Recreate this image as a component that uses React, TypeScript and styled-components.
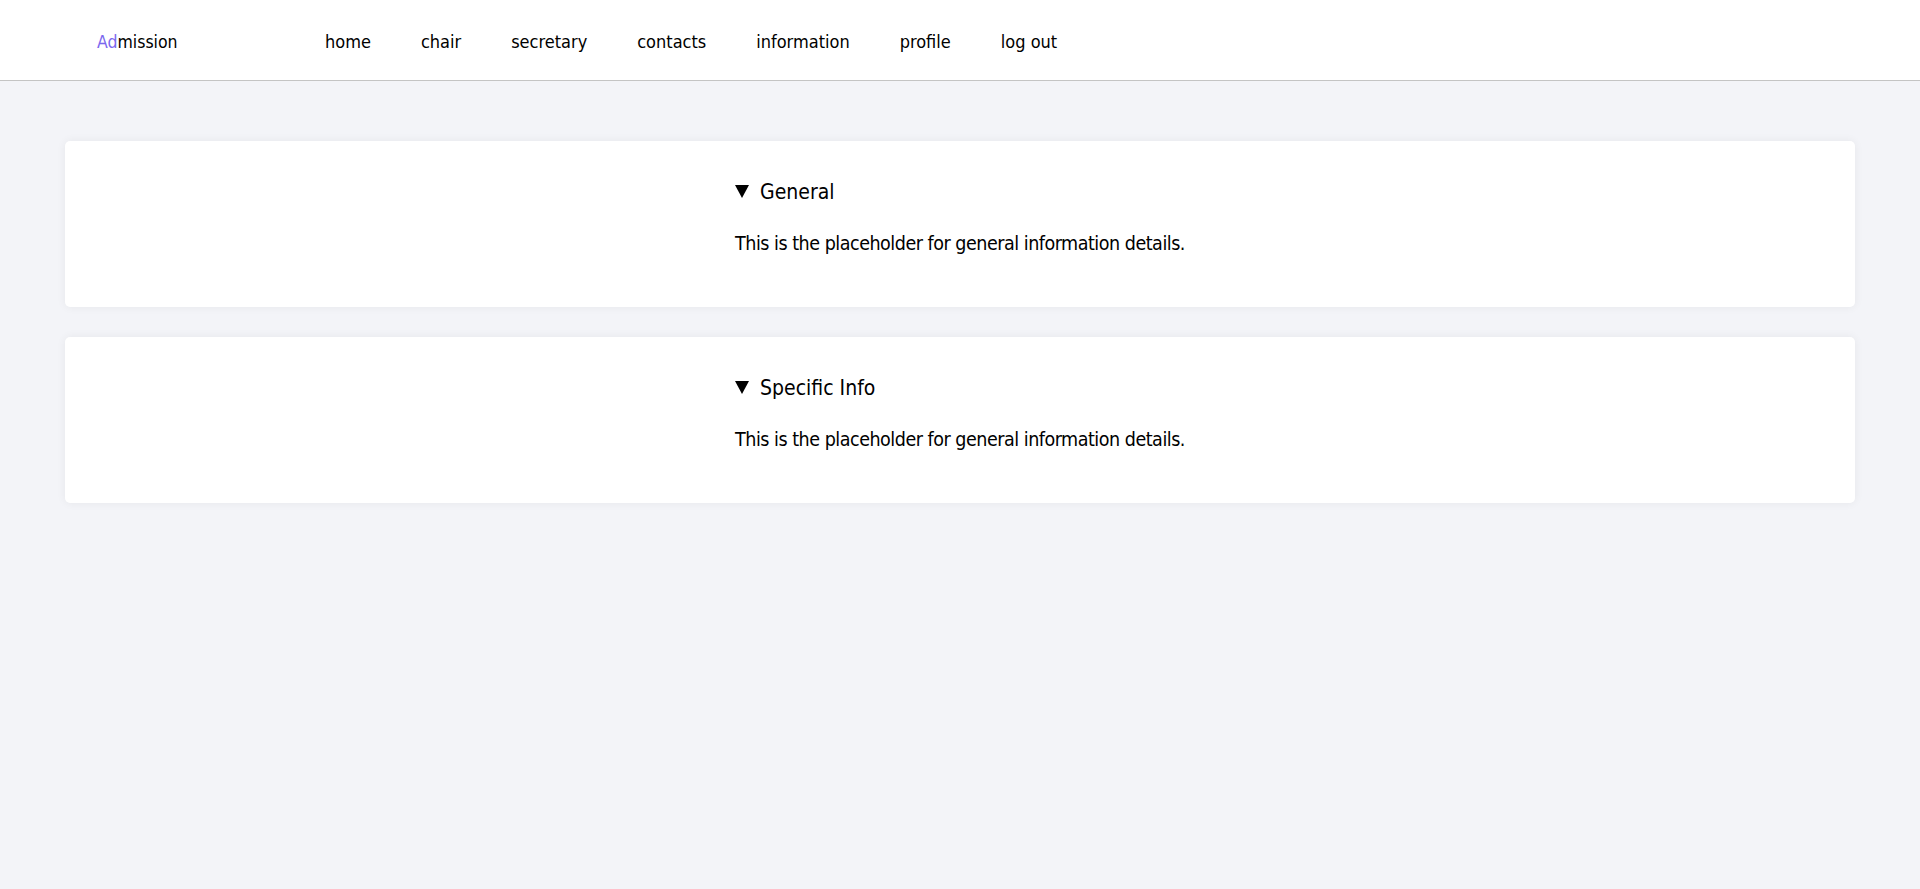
import React from "react";
import styled, { createGlobalStyle } from "styled-components";

const GlobalStyle = createGlobalStyle`
  * { box-sizing: border-box; }
  html, body { margin: 0; padding: 0; }
  body {
    background: #f3f4f8;
    font-family: "DejaVu Sans Condensed", "Liberation Sans Narrow", "Liberation Sans", sans-serif;
    font-stretch: condensed;
    color: #000;
  }
`;

const Page = styled.div`
  min-height: 889px;
  background: #f3f4f8;
`;

const Header = styled.header`
  height: 81px;
  background: #fff;
  border-bottom: 1px solid #c4c4c4;
  display: flex;
  align-items: flex-start;
  padding: 30px 0 0 97px;
`;

const Logo = styled.div`
  width: 228px;
  font-size: 17.5px;
  line-height: 24px;
  color: #000;
`;

const Accent = styled.span`
  color: #7b68ee;
`;

const Nav = styled.nav`
  display: flex;
  gap: 50px;
`;

const NavLink = styled.a`
  font-size: 18px;
  line-height: 24px;
  color: #000;
  text-decoration: none;
  cursor: pointer;
`;

const Main = styled.main`
  padding: 60px 65px;
  display: flex;
  flex-direction: column;
  gap: 30px;
`;

const Card = styled.section`
  height: 166px;
  background: #fff;
  border-radius: 5px;
  box-shadow: 0 0 10px rgba(0, 0, 0, 0.06);
  display: flex;
  justify-content: center;
  padding-top: 38px;
`;

const Details = styled.details`
  text-align: left;
`;

const Summary = styled.summary`
  list-style: none;
  display: flex;
  align-items: center;
  gap: 11px;
  font-size: 21px;
  line-height: 26px;
  cursor: pointer;
  &::-webkit-details-marker { display: none; }
`;

const Triangle = styled.span`
  flex: none;
  width: 0;
  height: 0;
  border-left: 7px solid transparent;
  border-right: 7px solid transparent;
  border-top: 13px solid #000;
  margin-top: -2px;
`;

const Body = styled.p`
  margin: 27px 0 0;
  font-size: 19.5px;
  letter-spacing: -0.48px;
  line-height: 24px;
`;

const sections = [
  { title: "General", text: "This is the placeholder for general information details." },
  { title: "Specific Info", text: "This is the placeholder for general information details." },
];

const links = ["home", "chair", "secretary", "contacts", "information", "profile", "log out"];

export default function App() {
  return (
    <Page>
      <GlobalStyle />
      <Header>
        <Logo>
          <Accent>Ad</Accent>mission
        </Logo>
        <Nav>
          {links.map((l) => (
            <NavLink key={l}>{l}</NavLink>
          ))}
        </Nav>
      </Header>
      <Main>
        {sections.map((s) => (
          <Card key={s.title}>
            <Details open>
              <Summary>
                <Triangle />
                {s.title}
              </Summary>
              <Body>{s.text}</Body>
            </Details>
          </Card>
        ))}
      </Main>
    </Page>
  );
}
